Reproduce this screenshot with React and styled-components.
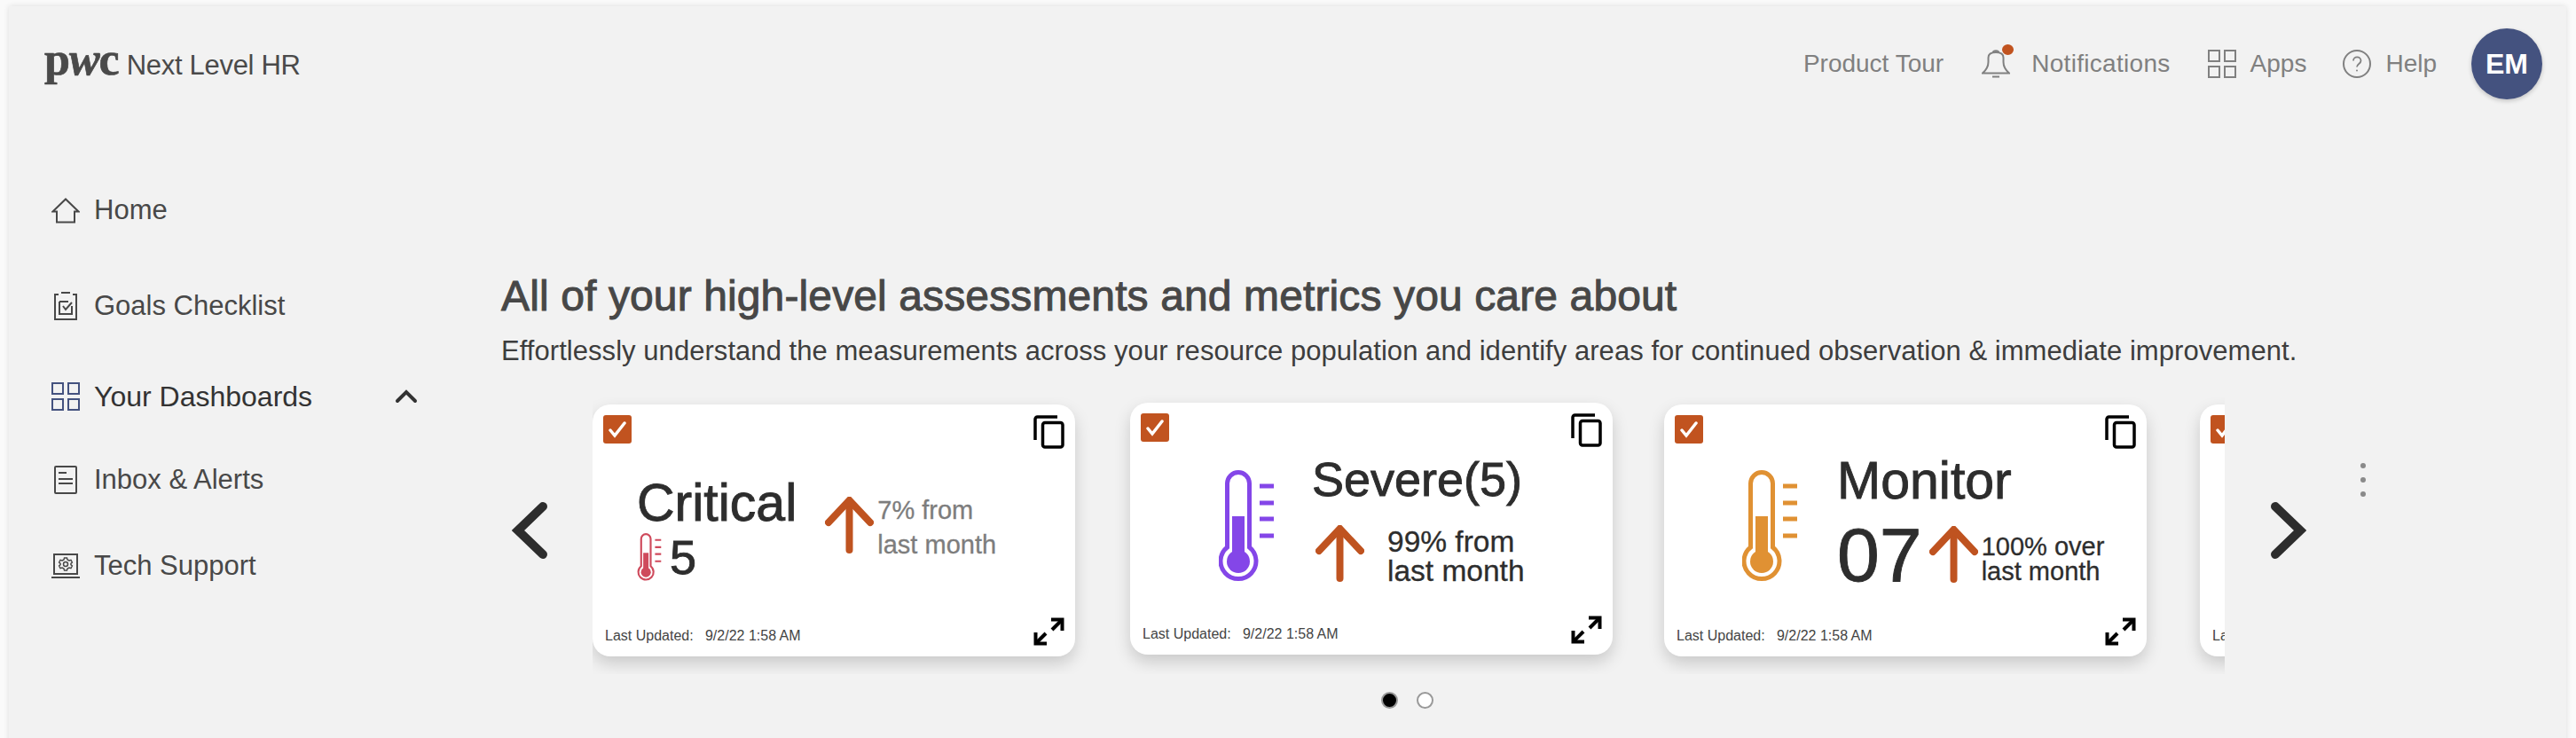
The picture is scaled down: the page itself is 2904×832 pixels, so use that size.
import React from "react";
import styled, { createGlobalStyle } from "styled-components";

const GlobalStyle = createGlobalStyle`
  html, body {
    margin: 0;
    height: 100%;
    overflow: hidden;
    background: #fafafa;
    font-family: "Liberation Sans", Arial, sans-serif;
  }
`;

const Page = styled.div`
  width: 2904px;
  height: 832px;
  padding: 7px 11px 0 10px;
  box-sizing: border-box;
  overflow: hidden;
`;

const Panel = styled.div`
  height: 900px;
  background: #f2f2f2;
  box-shadow: 0 0 6px rgba(0, 0, 0, 0.12);
`;

const Header = styled.header`
  display: flex;
  align-items: center;
  justify-content: space-between;
  height: 80px;
  padding: 25px 27px 0 40px;
`;

const Brand = styled.div`
  display: flex;
  align-items: baseline;
  gap: 9px;
  color: #4a4a4a;
  margin-top: -10px;
`;

const LogoMark = styled.span`
  font-family: "Liberation Serif", serif;
  font-weight: 700;
  font-size: 52px;
  line-height: 52px;
  letter-spacing: -1px;
  -webkit-text-stroke: 0.7px #4a4a4a;
`;

const AppName = styled.span`
  font-size: 31px;
  letter-spacing: -0.3px;
`;

const TopNav = styled.nav`
  display: flex;
  align-items: center;
`;

const TopItem = styled.div`
  display: flex;
  align-items: center;
  gap: ${(p) => p.$gap || 16}px;
  margin-left: ${(p) => p.$left || 0}px;
  color: #808080;
  font-size: 28px;
  letter-spacing: ${(p) => p.$track || 0}px;
  white-space: nowrap;
  position: relative;
`;

const RedDot = styled.span`
  position: absolute;
  left: 23px;
  top: -6px;
  width: 13px;
  height: 12px;
  border-radius: 50%;
  background: #c1531f;
`;

const Avatar = styled.div`
  width: 80px;
  height: 80px;
  margin-left: 39px;
  border-radius: 50%;
  background: #44527f;
  color: #fff;
  font-weight: 700;
  font-size: 32px;
  display: flex;
  align-items: center;
  justify-content: center;
  box-shadow: 0 2px 5px rgba(0, 0, 0, 0.2);
`;

const Body = styled.div`
  display: flex;
`;

const Sidebar = styled.aside`
  width: 555px;
  flex-shrink: 0;
  padding: 105px 0 0 48px;
  box-sizing: border-box;
`;

const NavRow = styled.div`
  display: flex;
  align-items: center;
  height: 40px;
  margin-top: ${(p) => p.$top}px;
  font-size: ${(p) => (p.$active ? 32 : 31)}px;
  color: ${(p) => (p.$active ? "#333" : "#484848")};
`;

const NavIcon = styled.span`
  width: 32px;
  height: 32px;
  margin-right: 16px;
  display: flex;
  align-items: center;
  justify-content: center;
`;

const Caret = styled.svg`
  margin-left: 93px;
`;

const Main = styled.main`
  flex: 1;
  min-width: 0;
  padding-top: 197px;
`;

const Heading = styled.h1`
  margin: 0;
  font-size: 48px;
  line-height: 50px;
  font-weight: 400;
  letter-spacing: 0.12px;
  color: #474747;
  -webkit-text-stroke: 1px #474747;
`;

const Intro = styled.p`
  margin: 17px 0 0;
  font-size: 31px;
  line-height: 40px;
  letter-spacing: 0.05px;
  white-space: nowrap;
  color: #3d3d3d;
`;

const Carousel = styled.div`
  display: flex;
  align-items: flex-start;
  margin-top: 20px;
  padding-left: 12px;
`;

const Chevron = styled.svg`
  flex-shrink: 0;
  margin-top: 130px;
`;

const Stage = styled.div`
  width: 1840px;
  margin: 0 52px 0 51px;
  flex-shrink: 0;
`;

const Viewport = styled.div`
  display: flex;
  gap: 60px;
  padding: 20px 0;
  overflow: hidden;
`;

const Card = styled.section`
  display: flex;
  flex-direction: column;
  flex-shrink: 0;
  width: 544px;
  height: 284px;
  padding: 12px;
  box-sizing: border-box;
  background: #fff;
  border-radius: 20px;
  box-shadow: 0 8px 18px rgba(0, 0, 0, 0.17);
  margin-top: ${(p) => p.$nudge || 0}px;
  margin-bottom: ${(p) => -(p.$nudge || 0)}px;
  margin-left: ${(p) => p.$shift || 0}px;
  margin-right: ${(p) => -(p.$shift || 0)}px;
`;

const CardTop = styled.div`
  display: flex;
  justify-content: space-between;
  height: 38px;
`;

const Check = styled.span`
  width: 32px;
  height: 32px;
  border-radius: 3px;
  background: #c1531f;
  display: flex;
  align-items: center;
  justify-content: center;
`;

const CardBody = styled.div`
  flex: 1;
  min-height: 0;
  display: flex;
  align-items: flex-start;
  padding: ${(p) => p.$pad};
  color: #2d2d2d;
`;

const CardFoot = styled.div`
  display: flex;
  align-items: center;
  justify-content: space-between;
  height: 32px;
`;

const Updated = styled.span`
  font-size: 16px;
  color: #444;
  margin-left: 2px;
  margin-top: 10px;
  white-space: pre;
`;

const Stack = styled.div`
  display: flex;
  flex-direction: column;
  margin-left: ${(p) => p.$left || 0}px;
`;

const Title = styled.div`
  font-size: ${(p) => p.$size || 56}px;
  line-height: 60px;
  white-space: nowrap;
  -webkit-text-stroke: 0.9px #2d2d2d;
`;

const Row = styled.div`
  display: flex;
  align-items: ${(p) => p.$align || "center"};
  gap: ${(p) => p.$gap || 0}px;
  margin-top: ${(p) => p.$top || 0}px;
  margin-left: ${(p) => p.$left || 0}px;
`;

const Count = styled.div`
  font-size: ${(p) => p.$size}px;
  line-height: ${(p) => p.$size}px;
  -webkit-text-stroke: 0.9px #2d2d2d;
`;

const Trend = styled.div`
  font-size: ${(p) => p.$size}px;
  line-height: ${(p) => p.$line}px;
  color: ${(p) => p.$color || "#2d2d2d"};
  margin-top: ${(p) => p.$top || 0}px;
  margin-left: ${(p) => p.$left || 0}px;
  -webkit-text-stroke: 0.3px ${(p) => p.$color || "#2d2d2d"};
  white-space: nowrap;
`;

const Dots = styled.div`
  display: flex;
  justify-content: center;
  gap: 21px;
  padding-right: 4px;
  margin-top: 20px;
`;

const Dot = styled.span`
  width: 19px;
  height: 19px;
  box-sizing: border-box;
  border-radius: 50%;
  border: 2px solid #999;
  background: ${(p) => (p.$on ? "#000" : "#fff")};
`;

const Kebab = styled.div`
  display: flex;
  flex-direction: column;
  gap: 10px;
  margin: 86px 0 0 61px;
  span {
    width: 6px;
    height: 6px;
    border-radius: 50%;
    background: #8a8a8a;
  }
`;

const Glyph = styled.svg`
  flex-shrink: 0;
`;

const GridIcon = ({ color }) => (
  <Glyph width="32" height="32" viewBox="0 0 32 32" fill="none" stroke={color} strokeWidth="2">
    <rect x="1" y="1" width="12" height="12" />
    <rect x="19" y="1" width="12" height="12" />
    <rect x="1" y="19" width="12" height="12" />
    <rect x="19" y="19" width="12" height="12" />
  </Glyph>
);

const HomeIcon = () => (
  <svg width="32" height="29" viewBox="0 0 32 29" fill="none" stroke="#484848" strokeWidth="2">
    <path d="M1.5 15.5 16 1.5l14.5 14H26V27.5H6V15.5Z" />
  </svg>
);

const GoalsIcon = () => (
  <svg width="26" height="32" viewBox="0 0 26 32" fill="none" stroke="#484848" strokeWidth="2">
    <path d="M5 3H1v28h24V3h-4M8 1h10" />
    <path d="M6 11h10M6 11v14h14V16" />
    <path d="M10 16l3 4 7-8" />
  </svg>
);

const InboxIcon = () => (
  <svg width="26" height="32" viewBox="0 0 26 32" fill="none" stroke="#484848" strokeWidth="2">
    <rect x="1" y="1" width="24" height="30" rx="1" />
    <path d="M5 8h9M5 15h16M5 20h16" />
  </svg>
);

const TechIcon = () => (
  <svg width="32" height="28" viewBox="0 0 32 28" fill="none" stroke="#484848" strokeWidth="2">
    <rect x="3" y="1" width="26" height="22" />
    <path d="M0 27h32" />
    <circle cx="16" cy="12" r="2.5" strokeWidth="1.5" />
    <path
      d="M14.5 5h3l.5 2 2 1 2-.6 1.4 2.6-1.5 1.4v1.2l1.5 1.4-1.4 2.6-2-.6-2 1-.5 2h-3l-.5-2-2-1-2 .6-1.4-2.6 1.5-1.4v-1.2L8.6 10l1.4-2.6 2 .6 2-1z"
      strokeWidth="1.4"
    />
  </svg>
);

const BellIcon = () => (
  <Glyph width="32" height="32" viewBox="0 0 32 32" fill="none" stroke="#808080" strokeWidth="2">
    <path d="M1 26.5C5 23 7.5 19 7.5 14V9C7.5 5 11 3 16 3S24.500 5 24.500 9V14C24.500 19 27 23 31 26.500Z" />
    <path d="M12 30.500h8" />
    <path d="M13 3c0-2.500 6-2.500 6 0" />
  </Glyph>
);

const HelpIcon = () => (
  <Glyph width="32" height="32" viewBox="0 0 32 32" fill="none" stroke="#808080" strokeWidth="2">
    <circle cx="16" cy="16" r="15" />
    <path d="M12 12.500c0-5.500 8.500-5.500 8.500 0 0 3.500-4.500 3.500-4.500 7" strokeWidth="1.800" />
    <circle cx="16" cy="23.500" r="1" fill="#808080" stroke="none" />
  </Glyph>
);

const Thermometer = ({ color, width, height }) => (
  <Glyph width={width} height={height} viewBox="0 0 62 126" fill="none">
    <path d="M9.500 87V15a12.500 12.500 0 0 1 25 0V87A20 20 0 1 1 9.500 87Z" stroke={color} strokeWidth="5" />
    <rect x="15" y="52" width="14" height="50" fill={color} />
    <circle cx="22" cy="103" r="13" fill={color} />
    <path d="M46 18h16M46 37h16M46 55h16M46 74h16" stroke={color} strokeWidth="5" />
  </Glyph>
);

const UpArrow = () => (
  <Glyph width="55" height="64" viewBox="0 0 55 64" fill="none" stroke="#bf5320" strokeWidth="8" strokeLinecap="round">
    <path d="M27.500 60V6" />
    <path d="M4 29 27.500 4 51 29" />
  </Glyph>
);

const CheckMark = () => (
  <svg width="20" height="20" viewBox="0 0 20 20" fill="none" stroke="#fff" strokeWidth="3.500" strokeLinecap="round">
    <path d="M2 11l5 6L18 3" />
  </svg>
);

const CopyIcon = () => (
  <svg width="35" height="38" viewBox="0 0 35 38" fill="none" stroke="#000" strokeWidth="3.500">
    <rect x="10.500" y="8.500" width="22.500" height="27.500" rx="2.500" />
    <path d="M27 2H4.500A2.500 2.500 0 0 0 2 4.500V28" />
  </svg>
);

const ExpandIcon = () => (
  <svg width="35" height="32" viewBox="0 0 35 32" fill="none" stroke="#000" strokeWidth="4">
    <path d="M20 2.500H32.500V15" />
    <path d="M32 3 21 14" />
    <path d="M15 29.500H2.500V17" />
    <path d="M3 29 14 18" />
  </svg>
);

const CardShell = ({ children, nudge, shift, pad }) => (
  <Card $nudge={nudge} $shift={shift}>
    <CardTop>
      <Check>
        <CheckMark />
      </Check>
      <CopyIcon />
    </CardTop>
    <CardBody $pad={pad}>{children}</CardBody>
    <CardFoot>
      <Updated>{"Last Updated:   9/2/22 1:58 AM"}</Updated>
      <ExpandIcon />
    </CardFoot>
  </Card>
);

export default function App() {
  return (
    <Page>
      <GlobalStyle />
      <Panel>
        <Header>
          <Brand>
            <LogoMark>
              p<i>w</i>c
            </LogoMark>
            <AppName>Next Level HR</AppName>
          </Brand>
          <TopNav>
            <TopItem>Product Tour</TopItem>
            <TopItem $left={43} $gap={24} $track={0.3}>
              <BellIcon />
              <RedDot />
              Notifications
            </TopItem>
            <TopItem $left={42}>
              <GridIcon color="#808080" />
              Apps
            </TopItem>
            <TopItem $left={41}>
              <HelpIcon />
              Help
            </TopItem>
            <Avatar>EM</Avatar>
          </TopNav>
        </Header>
        <Body>
          <Sidebar>
            <NavRow $top={0}>
              <NavIcon><HomeIcon /></NavIcon>
              Home
            </NavRow>
            <NavRow $top={68}>
              <NavIcon><GoalsIcon /></NavIcon>
              Goals Checklist
            </NavRow>
            <NavRow $top={62} $active>
              <NavIcon><GridIcon color="#44527f" /></NavIcon>
              Your Dashboards
              <Caret width="26" height="16" viewBox="0 0 26 16" fill="none" stroke="#333" strokeWidth="4" strokeLinecap="round">
                <path d="M3 13 13 3l10 10" />
              </Caret>
            </NavRow>
            <NavRow $top={54}>
              <NavIcon><InboxIcon /></NavIcon>
              Inbox &amp; Alerts
            </NavRow>
            <NavRow $top={57}>
              <NavIcon><TechIcon /></NavIcon>
              Tech Support
            </NavRow>
          </Sidebar>
          <Main>
            <Heading>All of your high-level assessments and metrics you care about</Heading>
            <Intro>
              Effortlessly understand the measurements across your resource population and identify areas for continued observation &amp; immediate improvement.
            </Intro>
            <Carousel>
              <Chevron width="40" height="64" viewBox="0 0 40 64" fill="none" stroke="#2d2d2d" strokeWidth="10" strokeLinecap="round">
                <path d="M35 5 7 32l28 27" />
              </Chevron>
              <Stage>
                <Viewport>
                  <CardShell pad="31px 0 0 38px">
                    <Stack>
                      <Title $size={59}>Critical</Title>
                      <Row $gap={9} $top={4}>
                        <Thermometer color="#cf4a5c" width={28} height={54} />
                        <Count $size={54}>5</Count>
                      </Row>
                    </Stack>
                    <Row $gap={4} $align="flex-start" $top={23} $left={32}>
                      <UpArrow />
                      <Trend $size={29} $line={39} $top={-4} $color="#7d7d7d">
                        7% from
                        <br />
                        last month
                      </Trend>
                    </Row>
                  </CardShell>
                  <CardShell nudge={-2} shift={2} pad="6px 0 0 88px">
                    <Row $align="flex-start" $top={20}>
                      <Thermometer color="#8446e8" width={62} height={126} />
                    </Row>
                    <Stack $left={43}>
                      <Title $size={54}>Severe(5)</Title>
                      <Row $gap={26} $top={17} $left={4}>
                        <UpArrow />
                        <Trend $size={33.5} $line={33} $top={7}>
                          99% from
                          <br />
                          last month
                        </Trend>
                      </Row>
                    </Stack>
                  </CardShell>
                  <CardShell pad="6px 0 0 76px">
                    <Row $align="flex-start" $top={18}>
                      <Thermometer color="#e09133" width={62} height={126} />
                    </Row>
                    <Stack $left={45}>
                      <Title $size={59}>Monitor</Title>
                      <Row $gap={8} $top={10}>
                        <Count $size={86}>07</Count>
                        <UpArrow />
                        <Trend $size={29} $line={28} $top={10} $left={-4}>
                          100% over
                          <br />
                          last month
                        </Trend>
                      </Row>
                    </Stack>
                  </CardShell>
                  <CardShell pad="0" />
                </Viewport>
                <Dots>
                  <Dot $on />
                  <Dot />
                </Dots>
              </Stage>
              <Chevron width="40" height="64" viewBox="0 0 40 64" fill="none" stroke="#2d2d2d" strokeWidth="10" strokeLinecap="round">
                <path d="M5 5l28 27L5 59" />
              </Chevron>
              <Kebab>
                <span />
                <span />
                <span />
              </Kebab>
            </Carousel>
          </Main>
        </Body>
      </Panel>
    </Page>
  );
}
